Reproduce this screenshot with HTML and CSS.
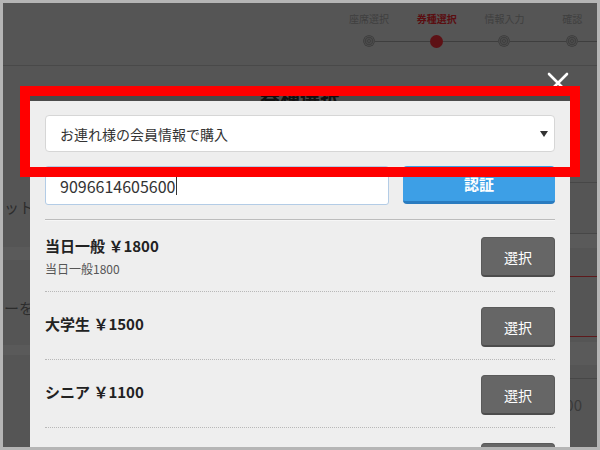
FILE: index.html
```html
<!DOCTYPE html>
<html lang="ja">
<head>
<meta charset="utf-8">
<title>券種選択</title>
<link rel="stylesheet" href="styles.css">
</head>
<body>
<div class="frame">
  <header class="header">
    <ol class="steps">
      <li class="step first"><span class="step-label">座席選択</span><span class="track"><i class="seg"></i><b class="dot"></b><i class="seg"></i></span></li>
      <li class="step active"><span class="step-label">券種選択</span><span class="track"><i class="seg"></i><b class="dot"></b><i class="seg"></i></span></li>
      <li class="step"><span class="step-label">情報入力</span><span class="track"><i class="seg"></i><b class="dot"></b><i class="seg"></i></span></li>
      <li class="step"><span class="step-label">確認</span><span class="track"><i class="seg"></i><b class="dot"></b><i class="seg"></i></span></li>
    </ol>
  </header>

  <div class="page">
    <div class="col col-left">
      <div class="blk h133"></div>
      <div class="blk txt">ットを選択してください</div>
      <div class="blk h32"></div>
      <div class="blk band h13"></div>
      <div class="blk h40"></div>
      <div class="blk txt">ーを利用する</div>
      <div class="blk h29"></div>
      <div class="blk band h10"></div>
    </div>
    <div class="col col-right">
      <div class="blk h116"></div>
      <div class="blk line"></div>
      <div class="blk h50"></div>
      <div class="blk line"></div>
      <div class="blk band h14"></div>
      <div class="blk h28"></div>
      <div class="blk redline"></div>
      <div class="blk h59"></div>
      <div class="blk redline"></div>
      <div class="blk h5"></div>
      <div class="blk band h23"></div>
      <div class="blk h13"></div>
      <div class="blk line"></div>
      <div class="blk h18"></div>
      <div class="blk txt right">¥1,000</div>
    </div>
  </div>

  <button class="close" type="button" aria-label="閉じる">
    <svg width="22" height="22" viewBox="0 0 22 22"><path d="M2 2 L20 20 M20 2 L2 20" stroke="#fff" stroke-width="2.6" fill="none" stroke-linecap="round"/></svg>
  </button>

  <section class="modal">
    <div class="modal-title"><h2>券種選択</h2></div>
    <div class="select">
      <span>お連れ様の会員情報で購入</span>
      <svg class="caret-down" width="8" height="6" viewBox="0 0 8 6"><polygon points="0,0 8,0 4,6" fill="#333"/></svg>
    </div>
    <div class="auth">
      <div class="input"><span>9096614605600</span><span class="cursor"></span></div>
      <button class="btn-auth" type="button">認証</button>
    </div>
    <div class="rule"></div>
    <ul class="tickets">
      <li class="ticket">
        <div class="info">
          <div class="t-title">当日一般 ￥1800</div>
          <div class="t-sub">当日一般1800</div>
        </div>
        <button class="btn-select" type="button">選択</button>
      </li>
      <li class="ticket">
        <div class="info"><div class="t-title">大学生 ￥1500</div></div>
        <button class="btn-select" type="button">選択</button>
      </li>
      <li class="ticket">
        <div class="info"><div class="t-title">シニア ￥1100</div></div>
        <button class="btn-select" type="button">選択</button>
      </li>
      <li class="ticket">
        <div class="info"></div>
        <button class="btn-select" type="button" aria-label="選択"></button>
      </li>
    </ul>
  </section>

  <div class="highlight"></div>
</div>
</body>
</html>
```

FILE: styles.css
```css
* { box-sizing: border-box; }
html, body { margin: 0; padding: 0; }
body {
  font-family: "Noto Sans CJK JP", "Noto Sans", sans-serif;
  background: #b5b5b5;
}
.frame {
  width: 600px;
  height: 450px;
  border: 3px solid #b5b5b5;
  background: #555555;
  overflow: hidden;
  position: relative;
}

/* header with progress steps */
.header {
  height: 63px;
  border-bottom: 1px solid #494949;
  display: flex;
  justify-content: flex-end;
}
.steps {
  list-style: none;
  margin: 0 -9px 0 0;
  padding: 0;
  display: flex;
}
.step {
  width: 67.7px;
  display: flex;
  flex-direction: column;
  align-items: center;
  padding-top: 9px;
}
.step-label {
  font-size: 10px;
  line-height: 14px;
  color: #3f3f3f;
  white-space: nowrap;
}
.track {
  margin-top: 9px;
  width: 100%;
  display: flex;
  align-items: center;
}
.seg {
  flex: 1;
  height: 1px;
  background: #3e3e3e;
}
.first .seg:first-child { background: transparent; }
.dot {
  width: 12px;
  height: 12px;
  border-radius: 50%;
  background: repeating-radial-gradient(circle, #4a4a4a 0 1px, #404040 1px 2px);
}
.active .step-label { color: #5a0e11; font-weight: bold; }
.active .dot { width: 13px; height: 13px; background: #5d1115; }

/* underlying page (dimmed) */
.page {
  display: grid;
  grid-template-columns: 297px 1fr;
}
.col { display: flex; flex-direction: column; }
.blk { flex: none; }
.band { background: #5a5a5a; }
.line { height: 1px; background: #474747; }
.redline { height: 1px; background: #5e1a1c; }
.txt {
  font-size: 15px;
  line-height: 16px;
  color: #2c2c2c;
  white-space: nowrap;
  padding-left: 1px;
}
.txt.right { text-align: right; padding-right: 15px; color: #3a3a3a; }
.h5 { height: 5px; } .h10 { height: 10px; } .h13 { height: 13px; } .h14 { height: 14px; }
.h18 { height: 18px; } .h23 { height: 23px; } .h28 { height: 28px; } .h29 { height: 29px; }
.h32 { height: 32px; } .h40 { height: 40px; } .h50 { height: 50px; } .h59 { height: 59px; }
.h116 { height: 116px; } .h133 { height: 133px; }

/* modal */
.close {
  position: absolute;
  left: 544px;
  top: 69px;
  width: 22px;
  height: 22px;
  padding: 0;
  border: 0;
  background: none;
  display: block;
}
.close svg { display: block; }
.modal {
  position: absolute;
  left: 27px;
  top: 93px;
  width: 540px;
  height: 400px;
  background: #eeeeee;
  border-top: 5px solid #4a4a4a;
  padding: 14px 15px 0;
}
.modal-title {
  position: absolute;
  left: 0;
  right: 0;
  bottom: 100%;
  height: 20px;
  overflow: hidden;
  padding-top: 5px;
}
.modal-title h2 {
  margin: 0;
  text-align: center;
  font-size: 20px;
  line-height: 22px;
  font-weight: bold;
  color: #111;
}
.select {
  height: 37px;
  background: #fff;
  border: 1px solid #d6d6d6;
  border-radius: 4px;
  display: flex;
  align-items: center;
  justify-content: space-between;
  padding: 0 6px 0 14px;
  font-size: 14px;
  color: #333;
}
.caret-down { display: block; }
.auth {
  margin-top: 14px;
  display: flex;
  gap: 14px;
}
.input {
  width: 344px;
  height: 39px;
  background: #fff;
  border: 1px solid #b3cce6;
  border-radius: 3px;
  display: flex;
  align-items: center;
  padding-left: 14px;
  font-size: 16px;
  color: #333;
}
.cursor {
  width: 1px;
  height: 18px;
  background: #333;
  margin-left: 1px;
}
.btn-auth {
  flex: 1;
  height: 38px;
  border: 0;
  border-bottom: 3px solid #2a7cc0;
  border-radius: 4px;
  background: #3d9fe6;
  color: #fff;
  font-family: inherit;
  font-size: 15px;
  font-weight: bold;
  padding: 0;
}
.rule {
  margin-top: 14px;
  height: 1px;
  background: #bcbcbc;
  box-shadow: 0 1px 0 #f6f6f6;
}
.tickets { list-style: none; margin: 0; padding: 0; }
.ticket {
  display: flex;
  align-items: center;
  justify-content: space-between;
  padding: 15px 0 12px;
  border-bottom: 1px dotted #b8b8b8;
}
.t-title {
  font-size: 15px;
  line-height: 22px;
  font-weight: bold;
  color: #222;
  margin-bottom: 6px;
}
.t-sub {
  margin-top: -4px;
  font-size: 12px;
  line-height: 20px;
  color: #555;
}
.btn-select {
  width: 74px;
  height: 40px;
  background: #666;
  border: 1px solid #5a5a5a;
  border-bottom: 2px solid #4c4c4c;
  border-radius: 4px;
  color: #fff;
  font-family: inherit;
  font-size: 14px;
  padding: 0;
}

/* red highlight annotation */
.highlight {
  position: absolute;
  left: 17px;
  top: 83px;
  width: 560px;
  height: 91px;
  border: 10px solid #ff0000;
}
```
